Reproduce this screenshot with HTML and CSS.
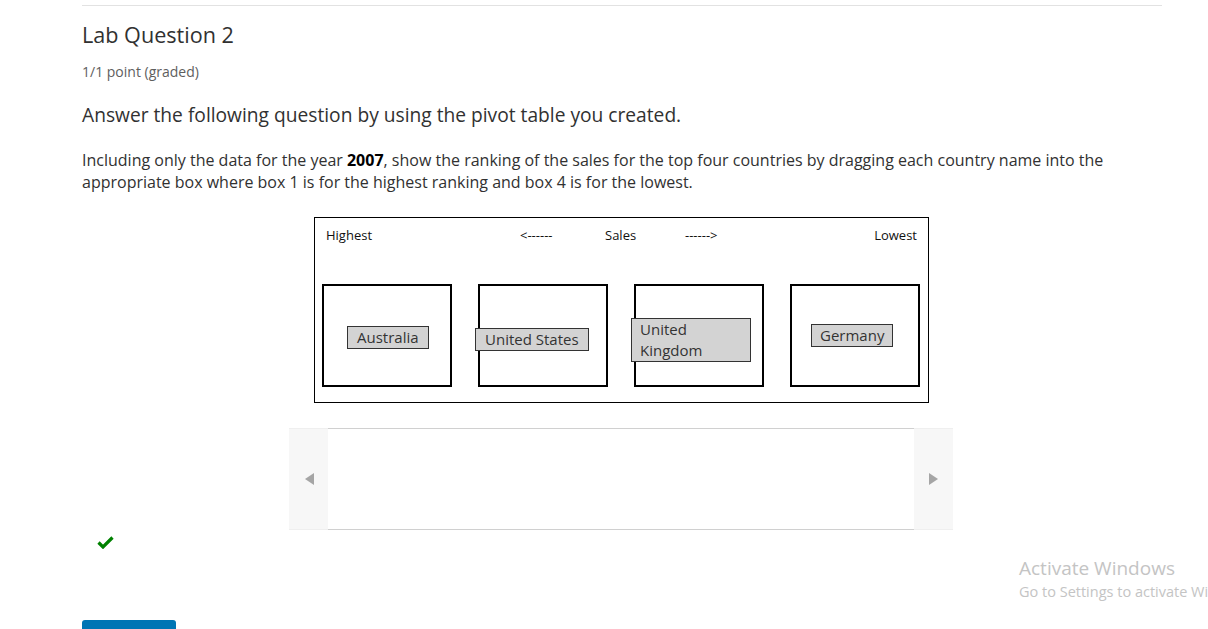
FILE: index.html
```html
<!DOCTYPE html>
<html>
<head>
<meta charset="utf-8">
<link rel="stylesheet" href="styles.css">
</head>
<body>
<div class="page">
  <div class="rule"></div>
  <h2 class="title">Lab Question 2</h2>
  <div class="points">1/1 point (graded)</div>
  <p class="lead">Answer the following question by using the pivot table you created.</p>
  <p class="body">Including only the data for the year <b>2007</b>, show the ranking of the sales for the top four countries by dragging each country name into the appropriate box where box 1 is for the highest ranking and box 4 is for the lowest.</p>

  <div class="diagram-wrap">
    <div class="diagram">
      <div class="labels">
        <span class="l-high">Highest</span>
        <span class="l-arrow1">&lt;------</span>
        <span class="l-sales">Sales</span>
        <span class="l-arrow2">------&gt;</span>
        <span class="l-low">Lowest</span>
      </div>
      <div class="zones">
        <div class="zone"><span class="chip chip-au">Australia</span></div>
        <div class="zone"><span class="chip chip-us">United States</span></div>
        <div class="zone"><span class="chip chip-uk">United<br>Kingdom</span></div>
        <div class="zone"><span class="chip chip-de">Germany</span></div>
      </div>
    </div>
  </div>

  <div class="carousel">
    <div class="nav"><span class="tri tri-left"></span></div>
    <div class="tray"></div>
    <div class="nav"><span class="tri tri-right"></span></div>
  </div>

  <div class="check">
    <svg width="17" height="13" viewBox="0 0 17 13"><path d="M1.5 6.5 L6 11 L15.5 1.5" fill="none" stroke="#008100" stroke-width="3.2"/></svg>
  </div>

  <div class="submit"></div>
</div>
<div class="watermark">
  <div class="wm1">Activate Windows</div>
  <div class="wm2">Go to Settings to activate Windows.</div>
</div>
</body>
</html>
```
FILE: styles.css
```css
html, body {
  margin: 0;
  padding: 0;
  background: #fff;
  overflow: hidden;
}
body {
  font-family: "Open Sans", "Noto Sans", sans-serif;
  color: #313131;
  width: 1208px;
  height: 629px;
  position: relative;
}
.page {
  padding-left: 82px;
  width: 1080px;
}
.rule {
  margin-top: 5px;
  border-top: 1px solid #e2e2e2;
  width: 1080px;
}
.title {
  margin: 14px 0 0 0;
  font-size: 21.6px;
  font-weight: 400;
  line-height: 30px;
  color: #313131;
}
.points {
  margin-top: 12px;
  font-size: 14px;
  line-height: 20px;
  color: #5e5e5e;
}
.lead {
  margin: 20px 0 0 0;
  font-size: 19.2px;
  line-height: 26px;
  color: #313131;
}
.body {
  margin: 21px 0 0 0;
  font-size: 16px;
  line-height: 22px;
  color: #313131;
}
.body b {
  font-weight: 700;
  color: #000;
}
.diagram-wrap {
  margin-top: 24px;
  padding-left: 232px;
}
.diagram {
  width: 613px;
  height: 184px;
  border: 1px solid #000;
  font-family: "Open Sans", "Noto Sans", sans-serif;
  color: #111;
}
.labels {
  position: relative;
  height: 66px;
  font-size: 13px;
}
.labels span {
  position: absolute;
  top: 9px;
  line-height: 17px;
}
.l-high { left: 11px; }
.l-arrow1 { left: 205px; }
.l-sales { left: 290px; }
.l-arrow2 { left: 370px; }
.l-low { right: 11px; }
.zones {
  display: flex;
  gap: 26px;
  padding-left: 7px;
}
.zone {
  position: relative;
  width: 126px;
  height: 99px;
  border: 2px solid #000;
}
.chip {
  position: absolute;
  background: #d3d3d3;
  border: 1px solid #333;
  color: #333;
  font-size: 15px;
  line-height: 21px;
  padding: 0 8px;
  white-space: nowrap;
}
.chip-au { left: 23px; top: 40px; padding: 0 9px; }
.chip-us { left: -5px; top: 42px; padding: 0 9px; }
.chip-uk { left: -5px; top: 32px; width: 102px; padding: 0 8px; line-height: 21px; }
.chip-de { left: 19px; top: 38px; }
.carousel {
  margin: 25px 0 0 207px;
  display: flex;
  width: 664px;
  height: 102px;
}
.nav {
  width: 39px;
  background: #f7f7f7;
  border-top: 1px solid #efefef;
  border-bottom: 1px solid #efefef;
  display: flex;
  align-items: center;
  justify-content: center;
  box-sizing: border-box;
}
.tray {
  flex: 1;
  background: #fff;
  border-top: 1px solid #d0d0d0;
  border-bottom: 1px solid #d0d0d0;
  box-sizing: border-box;
}
.tri {
  width: 0;
  height: 0;
  border-top: 6px solid transparent;
  border-bottom: 6px solid transparent;
}
.tri-left { border-right: 9px solid #a5a5a5; margin-left: 2px; }
.tri-right { border-left: 9px solid #a5a5a5; margin-right: 1px; }
.check {
  margin: 6px 0 0 15px;
  height: 14px;
}
.check svg { display: block; }
.submit {
  margin-top: 70px;
  width: 94px;
  height: 20px;
  background: #0075b4;
  border-radius: 3px 3px 0 0;
}
.watermark {
  position: absolute;
  left: 1019px;
  top: 556px;
  white-space: nowrap;
  color: #c4c4c4;
  font-family: "Open Sans", "Noto Sans", sans-serif;
}
.wm1 { font-size: 19px; line-height: 25px; }
.wm2 { font-size: 14.5px; line-height: 22px; }
```
